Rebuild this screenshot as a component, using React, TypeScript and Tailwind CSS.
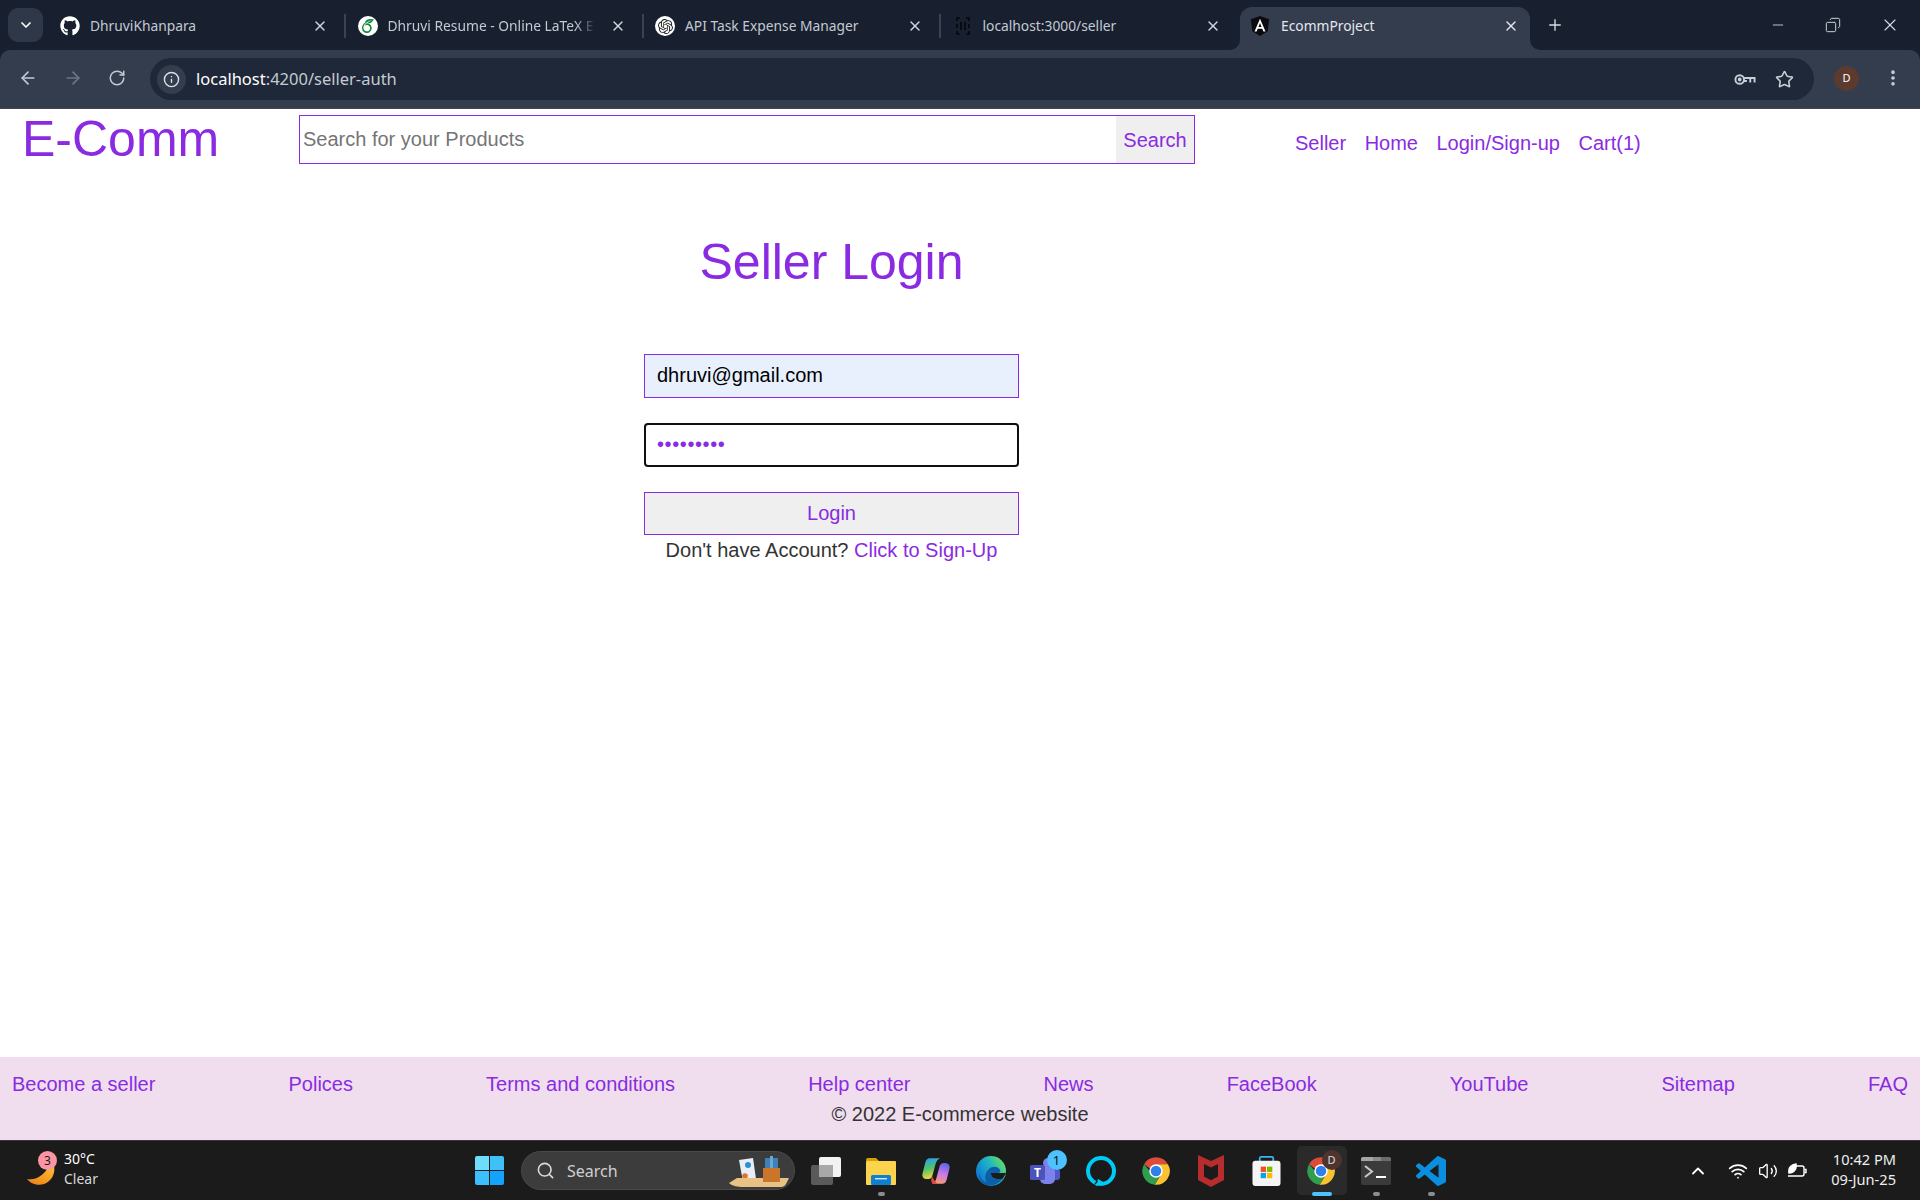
import React from "react";
import { FaGithub } from "react-icons/fa";
import { SiOpenai, SiOverleaf } from "react-icons/si";
import {
  ArrowLeft,
  ArrowRight,
  ChevronDown,
  ChevronUp,
  Copy,
  Info,
  Minus,
  MoreVertical,
  Plus,
  RotateCw,
  Search,
  Star,
  Volume2,
  Wifi,
  X,
} from "lucide-react";

const footerLinks = [
  "Become a seller",
  "Polices",
  "Terms and conditions",
  "Help center",
  "News",
  "FaceBook",
  "YouTube",
  "Sitemap",
  "FAQ",
];

const navLinks = ["Seller", "Home", "Login/Sign-up", "Cart(1)"];

const AngularIcon = () => (
  <svg viewBox="0 0 24 24" className="w-[22px] h-[22px] -ml-[1px]">
    <path d="M12 1 2 4.6l1.6 13.2L12 23l8.4-5.2L22 4.6z" fill="#0b0b0f" />
    <path d="M12 4 6 18h2.3l1.2-3h5l1.2 3H18zm-1.7 9L12 8.8l1.7 4.2z" fill="#fff" />
  </svg>
);

const BracketIcon = () => (
  <svg viewBox="0 0 20 20" className="w-5 h-5" fill="none" stroke="#05070c" strokeWidth="1.6">
    <path d="M7 2H4v3M4 8v4M4 15v3h3M13 2h3v3M16 8v4M16 15v3h-3M8 6v8M12 6v8" />
  </svg>
);

interface ITab {
  title: string;
  icon: React.ReactNode;
  fade?: boolean;
  active?: boolean;
  sep?: boolean;
}

const tabs: ITab[] = [
  { title: "DhruviKhanpara", icon: <FaGithub className="text-white w-5 h-5" />, sep: true },
  {
    title: "Dhruvi Resume - Online LaTeX E",
    fade: true,
    sep: true,
    icon: (
      <div className="w-5 h-5 rounded-full bg-white flex items-center justify-center">
        <SiOverleaf className="text-[#138a3e] w-[14px] h-[14px]" />
      </div>
    ),
  },
  {
    title: "API Task Expense Manager",
    sep: true,
    icon: (
      <div className="w-5 h-5 rounded-full bg-white flex items-center justify-center">
        <SiOpenai className="text-[#222] w-[15px] h-[15px]" />
      </div>
    ),
  },
  { title: "localhost:3000/seller", icon: <BracketIcon /> },
  { title: "EcommProject", icon: <AngularIcon />, active: true },
];

const BrowserTab = ({ title, icon, fade, active, sep }: ITab) => (
  <div
    className={
      active
        ? "relative w-[290px] h-[43px] mt-[7px] pl-[10px] pb-[5px] flex items-center rounded-t-[12px] bg-[#343d4e] text-[#e4e7ec]"
        : "relative w-[297.5px] h-[43px] mt-[7px] pl-[10px] pb-[5px] flex items-center text-[#c4c9d2]"
    }
  >
    {icon}
    <span
      className={
        fade
          ? "ml-[10px] w-[208px] whitespace-nowrap text-[13.8px] [mask-image:linear-gradient(to_right,black_90%,transparent)]"
          : "ml-[10px] w-[208px] whitespace-nowrap text-[13.8px]"
      }
    >
      {title}
    </span>
    <X className={active ? "absolute left-[263px] top-[11px] w-4 h-4 text-[#e4e7ec]" : "absolute left-[262px] top-[11px] w-4 h-4 text-[#d4d8de]"} strokeWidth={2} />
    {sep && <div className="absolute left-[294px] top-[7px] h-[24px] w-[2px] bg-[#3a4353]" />}
    {active && (
      <>
        <svg viewBox="0 0 10 10" className="absolute left-[-10px] bottom-0 w-[10px] h-[10px]">
          <path d="M10 0v10H0A10 10 0 0 0 10 0z" fill="#343d4e" />
        </svg>
        <svg viewBox="0 0 10 10" className="absolute right-[-10px] bottom-0 w-[10px] h-[10px]">
          <path d="M0 0v10h10A10 10 0 0 1 0 0z" fill="#343d4e" />
        </svg>
      </>
    )}
  </div>
);

const KeyIcon = () => (
  <svg viewBox="0 0 24 24" className="w-[23px] h-[23px]" fill="none" stroke="#c9ced6" strokeWidth="2">
    <circle cx="7" cy="12" r="4.500" />
    <circle cx="7" cy="12" r="1" fill="#c9ced6" />
    <path d="M11.500 10.500H22.500V15M18 10.500V15M14.500 13.500H11.500" />
  </svg>
);

const BrowserChrome = () => (
  <div className="shrink-0 bg-[#182030] font-['Noto_Sans',sans-serif]">
    <div className="h-[50px] flex items-start pl-2">
      <button className="mt-2 w-[35px] h-[34px] rounded-[10px] bg-[#2f3848] flex items-center justify-center">
        <ChevronDown className="w-4 h-4 text-white" strokeWidth={2.5} />
      </button>
      <div className="ml-[7px] flex">
        {tabs.map((t) => (
          <BrowserTab key={t.title} {...t} />
        ))}
      </div>
      <Plus className="ml-[16px] mt-[16px] w-[18px] h-[18px] text-[#d8dce2]" strokeWidth={1.8} />
      <Minus className="ml-[206px] mt-[17px] w-[16px] h-[16px] text-[#d8dce2]" strokeWidth={1.3} />
      <Copy className="ml-[39px] mt-[17px] w-[16px] h-[16px] text-[#d8dce2] -scale-x-100" strokeWidth={1.4} />
      <X className="ml-[39px] mt-[15px] w-[20px] h-[20px] text-[#d8dce2]" strokeWidth={1.3} />
    </div>
    <div className="h-[59px] bg-[#343d4e] rounded-t-[10px] border-b border-[#3f4654] flex items-start">
      <div className="pl-[6px] h-[56px] flex items-center">
        <div className="w-[44px] flex justify-center">
          <ArrowLeft className="w-[20px] h-[20px] text-[#c3c9d3]" strokeWidth={2} />
        </div>
        <div className="w-[45px] flex justify-center">
          <ArrowRight className="w-[20px] h-[20px] text-[#6e7685]" strokeWidth={2} />
        </div>
        <div className="w-[44px] flex justify-center">
          <RotateCw className="w-[18px] h-[18px] text-[#c3c9d3]" strokeWidth={2} />
        </div>
      </div>
      <div className="mt-2 ml-[11px] w-[1664px] h-[42px] rounded-full bg-[#1e2839] flex items-center pl-[7px] pr-[20px]">
        <div className="w-[29px] h-[29px] rounded-full bg-[#343d4e] flex items-center justify-center">
          <Info className="w-[17px] h-[17px] text-[#dde0e5]" strokeWidth={2} />
        </div>
        <span className="ml-[10px] text-[16.5px] text-[#c6cad2]">
          <span className="text-white">localhost</span>:4200/seller-auth
        </span>
        <div className="ml-auto flex items-center gap-[19px]">
          <KeyIcon />
          <Star className="w-[19px] h-[19px] text-[#c9ced6]" strokeWidth={2} />
        </div>
      </div>
      <div className="mt-[16px] ml-[20px] w-[25px] h-[25px] rounded-full bg-[#5d3a2e] flex items-center justify-center text-[11px] text-white">
        D
      </div>
      <MoreVertical className="mt-[18px] ml-[24px] w-[20px] h-[20px] text-[#c9ced6]" strokeWidth={2.4} />
    </div>
  </div>
);

const ChromeLogo = () => (
  <svg viewBox="0 0 24 24" className="w-[30px] h-[30px]">
    <path d="M12 1a11 11 0 0 1 9.530 5.500H12L7 10 2.470 6.500A11 11 0 0 1 12 1z" fill="#dd4b3a" />
    <path d="M2.470 6.500A11 11 0 0 0 11 23l4-7-3-4H7z" fill="#2f9e4f" />
    <path d="M21.530 6.500A11 11 0 0 1 11 23l4.500-7.500L12 6.500z" fill="#fbc230" />
    <circle cx="12" cy="12" r="5.400" fill="#fff" />
    <circle cx="12" cy="12" r="4.200" fill="#2f7fec" />
  </svg>
);

const ExplorerIcon = () => (
  <svg viewBox="0 0 30 28" className="w-[30px] h-[28px]">
    <path d="M0 3a2 2 0 0 1 2-2h8l3 3h-13z" fill="#d9a006" />
    <rect x="0" y="4" width="30" height="24" rx="1" fill="#fcd34d" />
    <rect x="5" y="18" width="20" height="10" rx="1.500" fill="#0f7fd0" />
    <rect x="9" y="21" width="12" height="1.400" fill="#cfe8fb" />
  </svg>
);

const CopilotIcon = () => (
  <svg viewBox="0 0 28 28" className="w-[30px] h-[30px]">
    <defs>
      <linearGradient id="cpa" x1="0.2" y1="0" x2="0.4" y2="1">
        <stop offset="0" stopColor="#2f9cf5" />
        <stop offset="0.5" stopColor="#4fc46a" />
        <stop offset="1" stopColor="#f8d838" />
      </linearGradient>
      <linearGradient id="cpb" x1="0.7" y1="0" x2="0.4" y2="1">
        <stop offset="0" stopColor="#5d63ea" />
        <stop offset="0.5" stopColor="#c87be6" />
        <stop offset="1" stopColor="#f89a72" />
      </linearGradient>
    </defs>
    <path d="M8 2h10c-2.500 1-3.800 3-4.400 5.500l-3 11c-.4 1.800-1.800 3-3.600 3H5.500C2.500 21.500 .500 19 1.500 16L4 6c.6-2.500 2-4 4-4z" fill="url(#cpa)" />
    <path d="M20 26H10c2.500-1 3.800-3 4.400-5.500l3-11c.4-1.800 1.800-3 3.600-3h1.500c3 0 5 2.500 4 5.500L24 22c-.6 2.500-2 4-4 4z" fill="url(#cpb)" />
    <path d="M10.500 19c1 3 2.800 5.500 5 7H11c-1.300-1-1.800-3.500-1.200-6z" fill="#e2483d" />
  </svg>
);

const EdgeIcon = () => (
  <svg viewBox="0 0 30 30" className="w-[30px] h-[30px]">
    <defs>
      <linearGradient id="edg" x1="0.9" y1="0.2" x2="0.1" y2="0.7">
        <stop offset="0" stopColor="#5fdc6a" />
        <stop offset="0.45" stopColor="#1fb4c4" />
        <stop offset="1" stopColor="#0f7dd4" />
      </linearGradient>
    </defs>
    <circle cx="15" cy="15" r="15" fill="url(#edg)" />
    <path d="M13 13c3-3 9-3 11 1 .8 1.800 0 3-2.500 3H15c-.4 4 4 7.500 12 5.500-3 4-8 7-13 7-7 0-12-6-11-13 .5 5 4 9 8 10-3-4-2-10 2-13.500z" fill="#0a5fa8" />
    <path d="M15 17c-.4 4 4 7.500 12 5.500l3-5.500h-8.500z" fill="#1b1b1b" />
  </svg>
);

const TeamsIcon = () => (
  <svg viewBox="0 0 32 28" className="w-[32px] h-[28px]">
    <circle cx="18" cy="6" r="5" fill="#7b83eb" />
    <circle cx="26" cy="9" r="3.500" fill="#5059c9" />
    <rect x="20" y="12" width="10" height="11" rx="3" fill="#5059c9" />
    <rect x="10" y="10" width="15" height="17" rx="5" fill="#7b83eb" />
    <rect x="0" y="8" width="15" height="15" rx="1.500" fill="#4b53bc" />
    <text x="7.500" y="20" textAnchor="middle" fontSize="12" fontWeight="700" fill="#fff" fontFamily="Noto Sans, sans-serif">T</text>
  </svg>
);

const AlexaIcon = () => (
  <svg viewBox="0 0 30 30" className="w-[30px] h-[30px]">
    <circle cx="15" cy="15" r="13" fill="none" stroke="#00cbf5" strokeWidth="4" />
    <path d="M9 29l3-6 6 3.500-7 3.500z" fill="#00cbf5" />
    <path d="M11.500 25l-2.500 3" stroke="#1b1b1b" strokeWidth="1.200" />
  </svg>
);

const McafeeIcon = () => (
  <svg viewBox="0 0 26 32" className="w-[26px] h-[32px]">
    <path d="M0 0l13 6 13-6v25l-13 7-13-7z" fill="#b72c2c" />
    <path d="M6 9l7 3.500L20 9v12.500l-7 3.700-7-3.700z" fill="#1b1b1b" />
  </svg>
);

const StoreIcon = () => (
  <svg viewBox="0 0 30 32" className="w-[29px] h-[31px]">
    <path d="M8 8V3.500C8 2.500 8.500 2 9.500 2h11c1 0 1.500.5 1.500 1.500V8" fill="none" stroke="#37b6f0" strokeWidth="1.800" />
    <rect x="0.500" y="6" width="29" height="26" rx="3" fill="#f5f5f5" />
    <rect x="9" y="12" width="5.500" height="5.500" fill="#f25022" />
    <rect x="15.500" y="12" width="5.500" height="5.500" fill="#7fba00" />
    <rect x="9" y="18.500" width="5.500" height="5.500" fill="#00a4ef" />
    <rect x="15.500" y="18.500" width="5.500" height="5.500" fill="#ffb900" />
  </svg>
);

const TerminalIcon = () => (
  <svg viewBox="0 0 30 28" className="w-[30px] h-[28px]">
    <rect x="0" y="0" width="30" height="28" rx="2" fill="#3b3b3b" />
    <path d="M0 2a2 2 0 0 1 2-2h10v4H0z" fill="#a5a5a5" />
    <path d="M12 0h8v4h-8z" fill="#8a8a8a" />
    <path d="M20 0h8a2 2 0 0 1 2 2v2H20z" fill="#6c6c6c" />
    <path d="M4 9l7 5.500-7 5.500" fill="none" stroke="#c9c9c9" strokeWidth="2" />
    <rect x="15" y="19" width="10" height="2" fill="#fff" />
  </svg>
);

const VsCodeIcon = () => (
  <svg viewBox="0 0 24 24" className="w-[30px] h-[30px]">
    <path
      d="M23.15 2.587L18.21.21a1.494 1.494 0 0 0-1.705.29l-9.46 8.63-4.12-3.128a.999.999 0 0 0-1.276.057L.327 7.261A1 1 0 0 0 .326 8.74L3.899 12 .326 15.26a1 1 0 0 0 .001 1.479L1.65 17.94a.999.999 0 0 0 1.276.057l4.12-3.128 9.46 8.63a1.492 1.492 0 0 0 1.704.29l4.942-2.377A1.5 1.5 0 0 0 24 20.06V3.939a1.5 1.5 0 0 0-.85-1.352zm-5.146 14.861L10.826 12l7.178-5.448v10.896z"
      fill="#0a8fe0"
    />
  </svg>
);

const TaskViewIcon = () => (
  <div className="relative w-[30px] h-[28px]">
    <div className="absolute left-0 bottom-0 w-[22px] h-[20px] rounded-[2px] bg-[#5a5a5a]" />
    <div className="absolute right-0 top-0 w-[22px] h-[20px] rounded-[2px] bg-[#f2f2f2]" />
    <div className="absolute left-[8px] top-[8px] w-[14px] h-[12px] bg-[#a8a8a8]" />
  </div>
);

const StartIcon = () => (
  <div className="grid grid-cols-2 gap-[1.5px] w-[29px] h-[29px]">
    <div className="rounded-tl-[2px] bg-[#6fdcfb]" />
    <div className="rounded-tr-[2px] bg-[#3fc0f7]" />
    <div className="rounded-bl-[2px] bg-[#3ac0fb]" />
    <div className="rounded-br-[2px] bg-[#14a3fb]" />
  </div>
);

const SearchArt = () => (
  <svg viewBox="0 0 62 36" className="w-[62px] h-[36px]">
    <path d="M10 7l14-2 3 21-13 3z" fill="#e8eef7" />
    <circle cx="19" cy="12" r="3" fill="#2e8fd0" />
    <circle cx="16" cy="23" r="2.800" fill="#e0702a" />
    <path d="M0 30l8-5h52l-3 6c-1 2-3 3-5 3H14c-5 0-11-1-14-4z" fill="#e8c184" />
    <rect x="34" y="15" width="17" height="14" fill="#c9752a" />
    <rect x="36" y="5" width="13" height="10" fill="#3f80b8" />
    <rect x="41" y="3" width="3" height="12" fill="#6ba8d8" />
  </svg>
);

const MoonIcon = () => (
  <svg viewBox="0 0 30 30" className="absolute left-0 top-[7px] w-[30px] h-[30px]">
    <defs>
      <linearGradient id="moon" x1="0.8" y1="0" x2="0.3" y2="1">
        <stop offset="0" stopColor="#fcc83a" />
        <stop offset="1" stopColor="#ee8518" />
      </linearGradient>
    </defs>
    <path d="M25 2A14.500 14.500 0 1 1 1 21c10 2 21-6 24-19z" fill="url(#moon)" />
  </svg>
);

const taskbarIcons = [
  { key: "task", icon: <TaskViewIcon /> },
  { key: "files", icon: <ExplorerIcon />, dot: true },
  { key: "copilot", icon: <CopilotIcon /> },
  { key: "edge", icon: <EdgeIcon /> },
  {
    key: "teams",
    badge: "1",
    icon: <TeamsIcon />,
  },
  { key: "alexa", icon: <AlexaIcon /> },
  { key: "chrome", icon: <ChromeLogo /> },
  { key: "mcafee", icon: <McafeeIcon /> },
  { key: "store", icon: <StoreIcon /> },
  { key: "chrome2", icon: <ChromeLogo />, active: true },
  { key: "terminal", icon: <TerminalIcon />, dot: true },
  { key: "code", icon: <VsCodeIcon />, dot: true },
];

const Taskbar = () => (
  <div className="h-[60px] shrink-0 bg-[#1b1b1b] border-t border-[#38383a] flex items-center font-['Noto_Sans',sans-serif] text-white">
    <div className="w-[475px] shrink-0 pl-[26px] flex items-center">
      <div className="relative w-[38px] h-[40px]">
        <MoonIcon />
        <div className="absolute left-[12px] top-0 w-[19px] h-[19px] rounded-full bg-[#fc95a3] text-[#1b1b1b] text-[12px] leading-[19px] text-center">
          3
        </div>
      </div>
      <div className="-mt-[3px] leading-[20px] text-[14px]">
        <div>30°C</div>
        <div className="text-[#d8d8d8]">Clear</div>
      </div>
    </div>
    <StartIcon />
    <div className="ml-[17px] w-[274px] h-[39px] rounded-full bg-[#3c3c3c] border border-[#4a4a4a] flex items-center pl-[14px] relative">
      <Search className="w-[19px] h-[19px] text-[#dcdcdc]" strokeWidth={2} />
      <span className="ml-[12px] text-[16px] text-[#d0d0d0]">Search</span>
      <div className="absolute right-[3px] bottom-0">
        <SearchArt />
      </div>
    </div>
    <div className="ml-[3.5px] flex">
      {taskbarIcons.map((item) => (
        <div key={item.key} className="relative w-[55px] h-[59px] flex items-center justify-center">
          {item.active && <div className="absolute left-[3px] top-[5px] w-[50px] h-[49px] rounded-[5px] bg-[#2a2a2a]" />}
          <div className="relative">{item.icon}</div>
          {item.badge && (
            <div className="absolute left-[28px] top-[9px] w-[20px] h-[20px] rounded-full bg-[#4cc2ff] text-[#111] text-[13px] leading-[20px] text-center">
              {item.badge}
            </div>
          )}
          {item.active && (
            <>
              <div className="absolute left-[28px] top-[9px] w-[20px] h-[20px] rounded-full bg-[#4e342e] text-[#ddd] text-[11px] leading-[20px] text-center">
                D
              </div>
              <div className="absolute left-[18px] top-[51px] w-[20px] h-[4px] rounded-full bg-[#4cc2ff]" />
            </>
          )}
          {item.dot && <div className="absolute left-[24px] top-[51px] w-[7px] h-[4px] rounded-full bg-[#8c8c8c]" />}
        </div>
      ))}
    </div>
    <div className="ml-auto w-[232px] flex items-center pr-[24px]">
      <ChevronUp className="w-5 h-5 text-white" strokeWidth={2.2} />
      <Wifi className="ml-[20px] w-5 h-5 text-white" strokeWidth={2} />
      <Volume2 className="ml-[10px] w-5 h-5 text-white" strokeWidth={1.6} />
      <svg viewBox="0 0 20 20" className="ml-[9px] w-5 h-5" fill="none" stroke="#fff" strokeWidth="1.400">
        <path d="M6 5h9a2 2 0 0 1 2 2v6a2 2 0 0 1-2 2H1" />
        <path d="M17.500 8.500h1.500v3h-1.500" />
        <path d="M2 12C1 7 4 4 9 3c1 5-2 9-7 9z" fill="#fff" />
      </svg>
      <div className="ml-auto -mt-[3px] text-right text-[14.6px] leading-[20px] text-[#efefef] whitespace-nowrap">
        <div>10:42 PM</div>
        <div>09-Jun-25</div>
      </div>
    </div>
  </div>
);

const App = () => {
  return (
    <div className="w-[1920px] h-[1200px] flex flex-col overflow-hidden bg-white font-['Liberation_Sans',Arial,sans-serif]">
      <BrowserChrome />

      {/* PAGE */}
      <div className="flex-1 flex flex-col min-h-0">
        <header className="flex items-center h-[60px]">
          <div className="w-[299px] shrink-0 pl-[22px] text-[50px] leading-[58px] text-[#8a2be2]">E-Comm</div>
          <div className="w-[896px] h-[49px] flex border border-[#8a2be2]">
            <input
              readOnly
              placeholder="Search for your Products"
              className="flex-1 min-w-0 px-[3px] text-[20px] outline-none placeholder:text-[#757575]"
            />
            <button className="w-[78px] pt-[2px] bg-[#efefef] text-[20px] text-[#8a2be2]">Search</button>
          </div>
          <nav className="ml-[100px] mt-[8px] flex gap-[18.500px] text-[20px] text-[#8a2be2]">
            {navLinks.map((l) => (
              <a key={l}>{l}</a>
            ))}
          </nav>
        </header>

        <main className="w-[375px] ml-[644px] flex flex-col">
          <h1 className="mt-[64px] text-center text-[50px] leading-[58px] text-[#8a2be2] whitespace-nowrap">Seller Login</h1>
          <input
            readOnly
            defaultValue="dhruvi@gmail.com"
            className="mt-[63px] h-[44px] px-3 pb-[2px] border border-[#8a2be2] bg-[#e8f0fe] text-[20px] text-black outline-none"
          />
          <input
            readOnly
            type="password"
            defaultValue="123456789"
            className="mt-[25px] h-[44px] px-[11px] pb-[2px] border-2 border-[#101010] rounded-[4px] text-[20px] tracking-[0.6px] text-[#8a2be2] outline-none"
          />
          <button className="mt-[25px] h-[43px] pb-[2px] border border-[#8a2be2] bg-[#efefef] text-[20px] text-[#8a2be2]">Login</button>
          <p className="mt-[4px] text-center text-[20px] leading-[23px] text-[#333] whitespace-nowrap">
            Don't have Account? <a className="text-[#8a2be2]">Click to Sign-Up</a>
          </p>
        </main>

        {/* FOOTER */}
        <footer className="mt-auto h-[83px] bg-[#f0deef] pt-[16px] text-[20px] leading-[23px]">
          <div className="flex justify-between px-3 text-[#8a2be2]">
            {footerLinks.map((l) => (
              <a key={l}>{l}</a>
            ))}
          </div>
          <p className="mt-[7px] text-center text-[#333]">© 2022 E-commerce website</p>
        </footer>
      </div>

      <Taskbar />
    </div>
  );
};

export default App;
